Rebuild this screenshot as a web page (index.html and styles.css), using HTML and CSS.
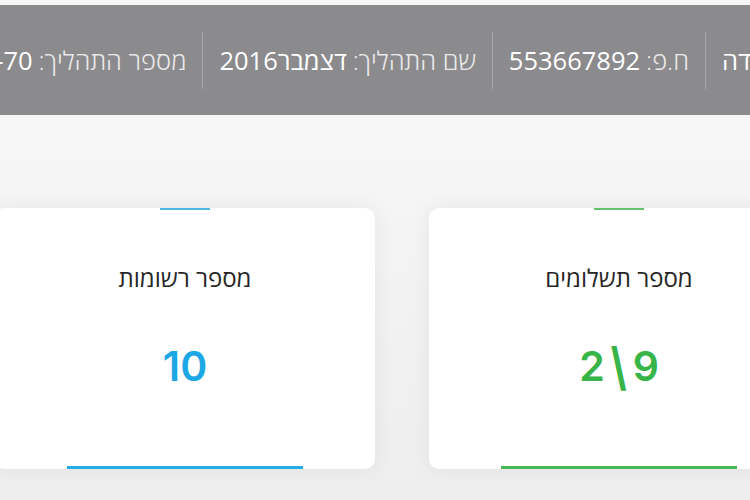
FILE: index.html
```html
<!DOCTYPE html>
<html lang="he" dir="rtl">
<head>
<meta charset="utf-8">
<link rel="stylesheet" href="styles.css">
</head>
<body>
<div class="page">
  <header class="info-bar">
    <div class="info-row">
      <div class="info-item first"><span class="label">שם הלקוח:</span> <span class="value">עבודה</span></div>
      <div class="info-item"><span class="label">ח.פ:</span> <span class="value">553667892</span></div>
      <div class="info-item"><span class="label">שם התהליך:</span> <span class="value">דצמבר2016</span></div>
      <div class="info-item"><span class="label">מספר התהליך:</span> <span class="value">12-70</span></div>
    </div>
  </header>
  <main class="cards">
    <section class="card green">
      <div class="accent-top"></div>
      <h2 class="card-title">מספר תשלומים</h2>
      <div class="card-num"><span>2</span><span class="slash">\</span><span>9</span></div>
      <div class="accent-bottom"></div>
    </section>
    <section class="card blue">
      <div class="accent-top"></div>
      <h2 class="card-title">מספר רשומות</h2>
      <div class="card-num">10</div>
      <div class="accent-bottom"></div>
    </section>
  </main>
</div>
</body>
</html>
```
FILE: styles.css
```css
html, body {
  margin: 0;
  padding: 0;
}
body {
  width: 750px;
  height: 500px;
  overflow: hidden;
  background: #f3f3f3;
  font-family: "Open Sans", "Noto Sans", "DejaVu Sans", sans-serif;
}
.page {
  width: 750px;
  height: 500px;
  overflow: hidden;
  padding-top: 5px;
  box-sizing: border-box;
  background: linear-gradient(#f7f7f7 120px, #f2f2f2 300px, #eeeeee);
}
.info-bar {
  height: 110px;
  background: #8b8a8c;
  display: flex;
  align-items: center;
  overflow: hidden;
}
.info-row {
  display: flex;
  align-items: center;
  flex: none;
}
.info-item {
  flex: none;
  height: 57px;
  display: flex;
  align-items: center;
  gap: 6px;
  padding: 0 16px;
  border-left: 1px solid #a6a5a7;
  font-size: 25.5px;
  white-space: nowrap;
  color: #fff;
}
.info-item.first {
  width: 28px;
  padding: 0 0 0 16px;
  justify-content: flex-end;
}
.label {
  font-weight: 300;
  color: #e9e9e9;
}
.value {
  font-weight: 400;
  color: #ffffff;
}
.cards {
  display: flex;
  gap: 54px;
  margin-right: -59px;
  padding-top: 93px;
}
.card {
  flex: none;
  width: 380px;
  height: 261px;
  background: #fff;
  border-radius: 10px;
  box-shadow: 0 0 22px rgba(0, 0, 0, 0.06);
  display: flex;
  flex-direction: column;
  align-items: center;
}
.accent-top {
  width: 50px;
  height: 2px;
  flex: none;
}
.accent-bottom {
  width: 236px;
  height: 3px;
  margin-top: auto;
  flex: none;
}
.card-title {
  margin: 54px 0 0;
  font-size: 24px;
  line-height: 28px;
  font-weight: 400;
  color: #262626;
}
.card-num {
  margin-top: 49px;
  font-family: Inter, "Noto Sans", sans-serif;
  font-size: 41px;
  line-height: 50px;
  font-weight: 600;
  direction: ltr;
  display: flex;
  gap: 6px;
}
.slash {
  font-weight: 700;
  transform: scaleY(1.25);
}
.blue .card-num { color: #1ba8e4; }
.green .card-num { color: #38b449; }
.blue .accent-top { background: #4db9ea; }
.blue .accent-bottom { background: #25abe5; }
.green .accent-top { background: #62c56e; }
.green .accent-bottom { background: #45b853; }
```
